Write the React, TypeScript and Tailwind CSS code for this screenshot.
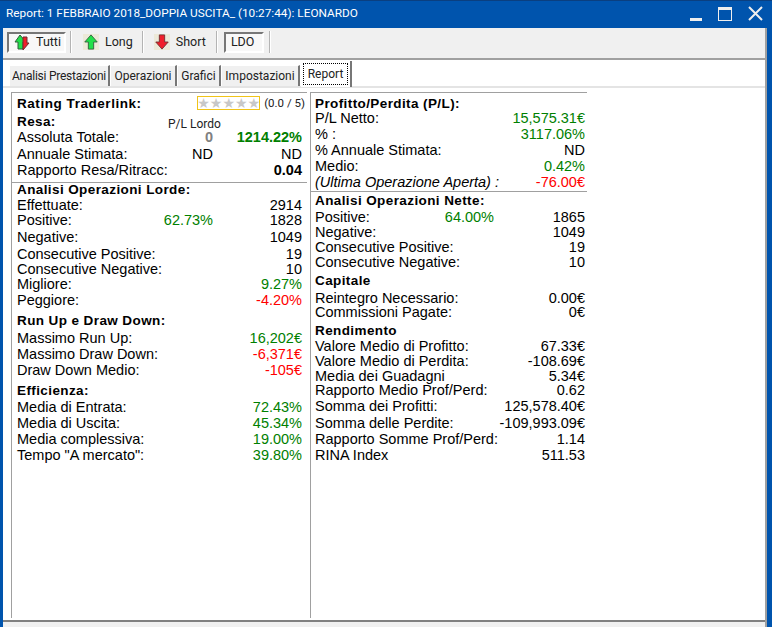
import type { ReactNode } from 'react';

type RowProps = {
  label: ReactNode;
  mid?: ReactNode;
  value?: ReactNode;
  h: string;
  right?: boolean;
};

function Row({ label, mid, value, h, right }: RowProps) {
  return (
    <div className={`grid items-center whitespace-nowrap ${right ? 'grid-cols-[minmax(0,1fr)_auto_91px]' : 'grid-cols-[minmax(0,1fr)_auto_89px]'} ${h}`}>
      <span>{label}</span>
      <span className="text-right">{mid}</span>
      <span className="text-right">{value}</span>
    </div>
  );
}

function Head({ children, h }: { children: ReactNode; h: string }) {
  return <div className={`flex items-center font-bold text-[13.5px] tracking-[0.4px] whitespace-nowrap ${h}`}>{children}</div>;
}

const Green = ({ children }: { children: ReactNode }) => <span className="text-[#008000]">{children}</span>;
const Red = ({ children }: { children: ReactNode }) => <span className="text-[#ff0000]">{children}</span>;

function ArrowUp() {
  return <path d="M8 1 L15 9 L11 9 L11 17 L5 17 L5 9 L1 9 Z" fill="#22e04a" stroke="#2f5f3a" strokeWidth="1" />;
}

function ArrowDown() {
  return <path d="M5 1 L11 1 L11 9 L15 9 L8 17 L1 9 L5 9 Z" fill="#f01f2a" stroke="#6f2f2f" strokeWidth="1" />;
}

function ToolButton({ children, icon }: { children: ReactNode; icon: ReactNode }) {
  return (
    <div className="flex items-center gap-[6px] h-[20px]">
      <div className="w-[16px] h-[16px] bg-[#ece9d8] flex items-center justify-center">{icon}</div>
      <span>{children}</span>
    </div>
  );
}

function Sep() {
  return <div className="w-[2px] h-[22px] bg-[#b4b4b4] border-r border-white" />;
}

function Tab({ children, w }: { children: ReactNode; w: string }) {
  return (
    <div className={`h-[21px] flex items-center justify-center whitespace-nowrap border-r-2 border-[#777] border-t border-t-white bg-[#f0f0f0] ${w}`}>
      {children}
    </div>
  );
}

export default function App() {
  return (
    <div className="w-[772px] h-[627px] bg-[#0054ad] flex flex-col pl-[3px] pr-[5px] font-['Liberation_Sans',sans-serif] text-[14.5px] text-black overflow-hidden">
      {/* Title bar */}
      <div className="h-[28px] -ml-[3px] -mr-[5px] pl-[6px] pr-[9px] pb-[2px] flex items-center text-white text-[11.8px] font-['Roboto',sans-serif] border-t border-[#0a3f80]">
        <span className="flex-1 whitespace-nowrap">Report: 1 FEBBRAIO 2018_DOPPIA USCITA_ (10:27:44): LEONARDO</span>
        <div className="flex items-center gap-[16px]">
          <div className="w-[12px] h-[14px] flex items-end"><div className="w-[12px] h-[3px] bg-[#eeeeee]" /></div>
          <div className="w-[14px] h-[14px] border border-[#eeeeee] border-t-[3px]" />
          <svg width="15" height="15" viewBox="0 0 15 15" fill="none" stroke="#eeeeee" strokeWidth="2">
            <path d="M1 1 L14 14 M14 1 L1 14" />
          </svg>
        </div>
      </div>

      <div className="flex-1 flex flex-col border-r-2 border-[#a0a0a0] bg-white min-h-0">
        {/* Toolbar */}
        <div className="h-[32px] bg-[#f0f0f0] border-b-2 border-[#a0a0a0] flex items-center pl-[4px] pb-[2px] gap-[4px] text-[12.5px] font-['Roboto',sans-serif] text-[#222]">
          <div className="w-[59px] h-[21px] flex items-center gap-[5px] pl-[5px] bg-[#f8f8f8] border-2 border-[#777] border-r-white border-b-white">
            <svg width="17" height="17" viewBox="0 0 17 17">
              <path d="M6 1 L12 8 L9 8 L9 15 L4 15 L4 8 L1 8 Z" fill="#22e04a" stroke="#2f5f3a" />
              <path d="M9 16 L15 9 L13 9 L13 3 L9 3 Z" fill="#f01f2a" stroke="#6f2f2f" />
            </svg>
            <span>Tutti</span>
          </div>
          <Sep />
          <div className="ml-[7px]">
            <ToolButton icon={<svg width="16" height="16" viewBox="0 0 16 18"><ArrowUp /></svg>}>Long</ToolButton>
          </div>
          <div className="w-[1px]" />
          <Sep />
          <div className="ml-[6px]">
            <ToolButton icon={<svg width="16" height="16" viewBox="0 0 16 18"><ArrowDown /></svg>}>Short</ToolButton>
          </div>
          <div className="w-[2px]" />
          <Sep />
          <div className="ml-[2px] w-[40px] h-[21px] flex items-center pl-[5px] bg-[#f8f8f8] border-2 border-[#777] border-r-white border-b-white">LDO</div>
          <div className="ml-[1px]"><Sep /></div>
        </div>

        {/* Tabs */}
        <div className="h-[28px] flex items-end pl-[7px] gap-[1px] text-[12px] font-['Roboto',sans-serif] text-[#222] border-b-2 border-[#e4e4e4]">
          <Tab w="w-[100px] tracking-[-0.25px]">Analisi Prestazioni</Tab>
          <Tab w="w-[66px]">Operazioni</Tab>
          <Tab w="w-[43px]">Grafici</Tab>
          <Tab w="w-[78px]">Impostazioni</Tab>
          <div className="w-[51px] h-[26px] -mb-[1px] p-[2px] bg-white border-r-2 border-[#777]">
            <div className="h-full flex items-center justify-center border border-dotted border-black">Report</div>
          </div>
        </div>

        {/* Report panels */}
        <div className="flex-1 flex min-h-0 pl-[8px] pt-[4px] pb-[2px]">
          <div className="w-[296px] pl-[5px] pr-[5px] pt-[2px] border-l border-t border-[#a0a0a0] leading-none">
            <div className="flex items-center h-[18px] whitespace-nowrap -mr-[3px]">
              <span className="font-bold text-[13.5px] tracking-[0.55px] flex-1">Rating Traderlink:</span>
              <div className="w-[63px] h-[14px] mb-[2px] border border-[#f0c419] flex items-center justify-center mr-[4px]">
                <span className="text-[#c8c8c8] text-[14px] leading-none font-['DejaVu_Sans',sans-serif]">★★★★★</span>
              </div>
              <span className="text-[11.5px] font-['Roboto',sans-serif] text-[#222]">(0.0 / 5)</span>
            </div>
            <div className="relative">
              <Head h="h-[16px] pt-[2px]">Resa:</Head>
              <span className="absolute left-[151px] top-[6px] text-[12px] leading-[10px] font-['Roboto',sans-serif] text-[#222] whitespace-nowrap">P/L Lordo</span>
            </div>
            <Row h="h-[16px]" label="Assoluta Totale:" mid={<span className="font-bold text-[#808080]">0</span>} value={<span className="font-bold text-[#008000]">1214.22%</span>} />
            <Row h="h-[17px] pt-[1px]" label="Annuale Stimata:" mid="ND" value="ND" />
            <Row h="h-[16px]" label="Rapporto Resa/Ritracc:" value={<b>0.04</b>} />
            <div className="h-[4px]" />
            <div className="-ml-[5px] -mr-[5px] border-t border-[#a0a0a0] pl-[5px]">
              <Head h="h-[14px]">Analisi Operazioni Lorde:</Head>
            </div>
            <Row h="h-[16px] pt-[1px]" label="Effettuate:" value="2914" />
            <Row h="h-[15px]" label="Positive:" mid={<Green>62.73%</Green>} value="1828" />
            <Row h="h-[17px] pt-[1px]" label="Negative:" value="1049" />
            <Row h="h-[17px] pt-[1px]" label="Consecutive Positive:" value="19" />
            <Row h="h-[15px]" label="Consecutive Negative:" value="10" />
            <Row h="h-[15px]" label="Migliore:" value={<Green>9.27%</Green>} />
            <Row h="h-[16px]" label="Peggiore:" value={<Red>-4.20%</Red>} />
            <div className="h-[4px]" />
            <Head h="h-[18px]">Run Up e Draw Down:</Head>
            <Row h="h-[16px]" label="Massimo Run Up:" value={<Green>16,202€</Green>} />
            <Row h="h-[16px]" label="Massimo Draw Down:" value={<Red>-6,371€</Red>} />
            <Row h="h-[16px] pt-[1px]" label="Draw Down Medio:" value={<Red>-105€</Red>} />
            <div className="h-[4px]" />
            <Head h="h-[17px]">Efficienza:</Head>
            <Row h="h-[16px]" label="Media di Entrata:" value={<Green>72.43%</Green>} />
            <Row h="h-[16px]" label="Media di Uscita:" value={<Green>45.34%</Green>} />
            <Row h="h-[16px]" label="Media complessiva:" value={<Green>19.00%</Green>} />
            <Row h="h-[16px]" label='Tempo "A mercato":' value={<Green>39.80%</Green>} />
          </div>

          <div className="ml-[3px] w-[277px] pl-[4px] pr-[2px] border-l border-[#a0a0a0] leading-none">
            <div className="-ml-[4px] -mr-[2px] border-t border-[#a0a0a0] pl-[4px] pr-[2px] pt-[1px]">
              <Head h="h-[16px] pt-[4px]">Profitto/Perdita (P/L):</Head>
            </div>
            <Row right h="h-[16px]" label="P/L Netto:" value={<Green>15,575.31€</Green>} />
            <Row right h="h-[16px]" label="% :" value={<Green>3117.06%</Green>} />
            <Row right h="h-[16px]" label="% Annuale Stimata:" value="ND" />
            <Row right h="h-[16px]" label="Medio:" value={<Green>0.42%</Green>} />
            <Row right h="h-[16px]" label={<i>(Ultima Operazione Aperta) :</i>} value={<Red>-76.00€</Red>} />
            <div className="h-[1px]" />
            <div className="-ml-[4px] -mr-[2px] border-t border-[#a0a0a0] pl-[4px] pr-[2px]">
              <Head h="h-[16px] pt-[2px]">Analisi Operazioni Nette:</Head>
            </div>
            <Row right h="h-[17px] pt-[1px]" label="Positive:" mid={<Green>64.00%</Green>} value="1865" />
            <Row right h="h-[15px]" label="Negative:" value="1049" />
            <Row right h="h-[15px]" label="Consecutive Positive:" value="19" />
            <Row right h="h-[15px]" label="Consecutive Negative:" value="10" />
            <Head h="h-[20px] pt-[2px]">Capitale</Head>
            <Row right h="h-[15px] pt-[1px]" label="Reintegro Necessario:" value="0.00€" />
            <Row right h="h-[15px]" label="Commissioni Pagate:" value="0€" />
            <Head h="h-[19px] pt-[2px]">Rendimento</Head>
            <Row right h="h-[15px]" label="Valore Medio di Profitto:" value="67.33€" />
            <Row right h="h-[15px]" label="Valore Medio di Perdita:" value="-108.69€" />
            <Row right h="h-[14px]" label="Media dei Guadagni" value="5.34€" />
            <Row right h="h-[15px]" label="Rapporto Medio Prof/Perd:" value="0.62" />
            <Row right h="h-[17px]" label="Somma dei Profitti:" value="125,578.40€" />
            <Row right h="h-[16px]" label="Somma delle Perdite:" value="-109,993.09€" />
            <Row right h="h-[16px]" label="Rapporto Somme Prof/Perd:" value="1.14" />
            <Row right h="h-[16px]" label="RINA Index" value="511.53" />
          </div>
        </div>

        <div className="h-[7px] bg-[#f0f0f0] border-t-2 border-[#808080]" />
      </div>
    </div>
  );
}
